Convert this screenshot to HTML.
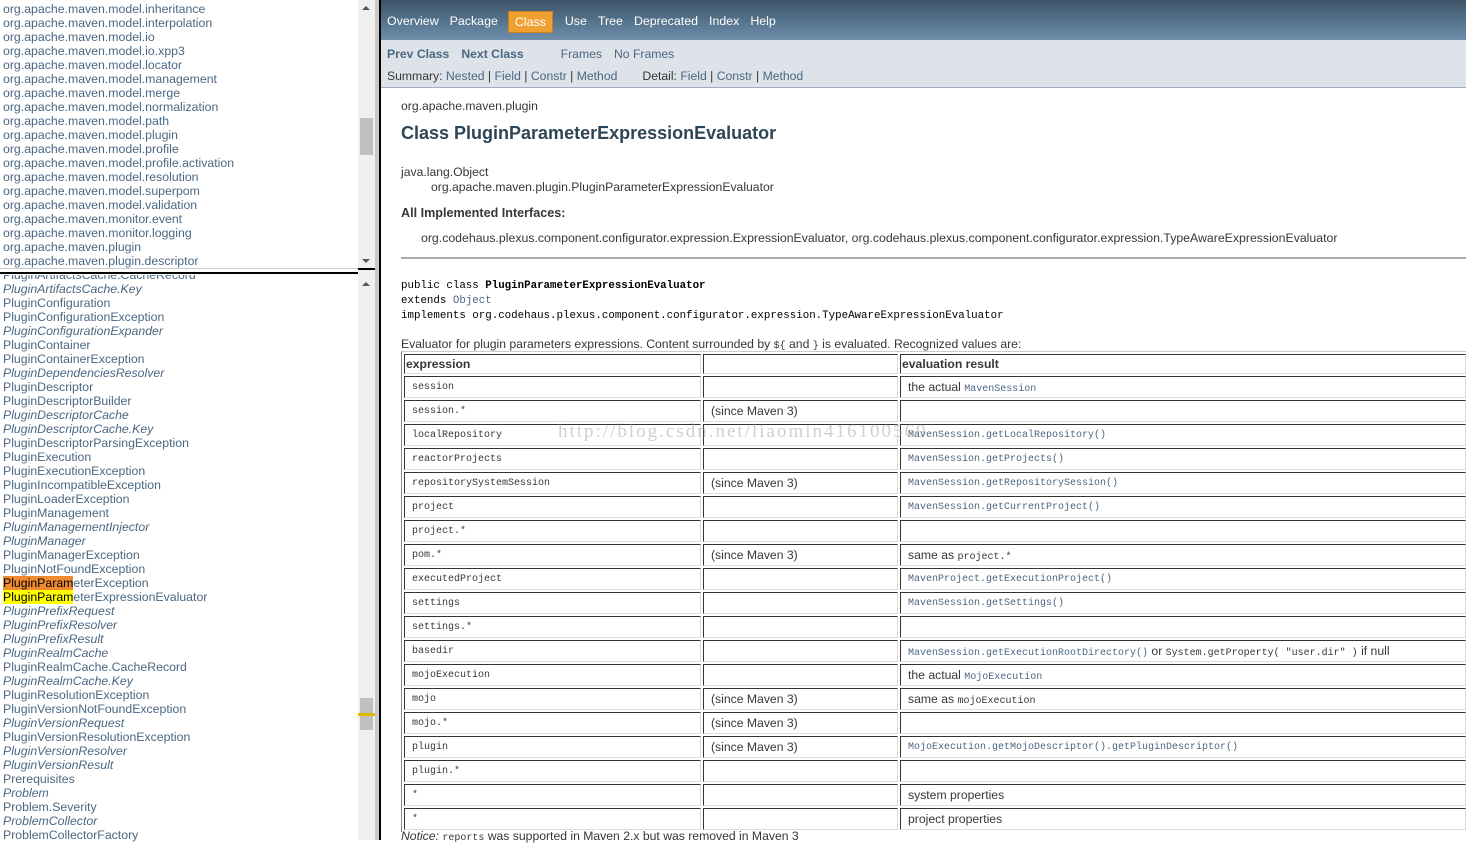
<!DOCTYPE html>
<html><head><meta charset="utf-8">
<style>
*{margin:0;padding:0;box-sizing:border-box}
body{width:1466px;height:840px;overflow:hidden;position:relative;background:#fff;font-family:"Liberation Sans",Arial,sans-serif;font-size:12.2px;color:#353833}
a,.l{color:#4A6782;text-decoration:none}
.abs{position:absolute}
.list{position:absolute;left:3px;line-height:14px;color:#4A6782;white-space:nowrap;font-size:12.3px}
.list i{font-style:italic}
.sb{position:absolute;left:358px;width:17px;background:#f0f0f0}
.arr{position:absolute;left:4px;width:0;height:0;border-left:4px solid transparent;border-right:4px solid transparent}
.mono{font-family:"Liberation Mono","Noto Serif CJK SC",monospace;font-size:10px}
.mono11{font-family:"Liberation Mono",monospace;font-size:10.8px}
table{position:absolute;left:401px;top:351px;width:1067px;table-layout:fixed;border-collapse:separate;border-spacing:2px;border-left:1px solid #888;border-top:1px solid #ccc}
td{border-top:1px solid #333;border-left:1px solid #333;border-bottom:1px solid #ddd;border-right:1px solid #ddd;height:22px;padding:0 7px;vertical-align:middle;white-space:nowrap;overflow:visible}
tr.h td{height:20px;font-weight:bold;padding:0 1px;font-size:12.2px}
</style></head><body>
<div class="list" style="top:2px">
org.apache.maven.model.inheritance<br>org.apache.maven.model.interpolation<br>org.apache.maven.model.io<br>org.apache.maven.model.io.xpp3<br>org.apache.maven.model.locator<br>org.apache.maven.model.management<br>org.apache.maven.model.merge<br>org.apache.maven.model.normalization<br>org.apache.maven.model.path<br>org.apache.maven.model.plugin<br>org.apache.maven.model.profile<br>org.apache.maven.model.profile.activation<br>org.apache.maven.model.resolution<br>org.apache.maven.model.superpom<br>org.apache.maven.model.validation<br>org.apache.maven.monitor.event<br>org.apache.maven.monitor.logging<br>org.apache.maven.plugin<br>org.apache.maven.plugin.descriptor
</div>
<div class="sb" style="top:0;height:268px"><div class="arr" style="top:6px;border-bottom:4px solid #555"></div><div class="abs" style="left:2px;top:118px;width:13px;height:37px;background:#c0c0c0"></div><div class="arr" style="top:259px;border-top:4px solid #555"></div></div>
<div class="list" style="top:268px">
PluginArtifactsCache.CacheRecord<br><i>PluginArtifactsCache.Key</i><br>PluginConfiguration<br>PluginConfigurationException<br><i>PluginConfigurationExpander</i><br>PluginContainer<br>PluginContainerException<br><i>PluginDependenciesResolver</i><br>PluginDescriptor<br>PluginDescriptorBuilder<br><i>PluginDescriptorCache</i><br><i>PluginDescriptorCache.Key</i><br>PluginDescriptorParsingException<br>PluginExecution<br>PluginExecutionException<br>PluginIncompatibleException<br>PluginLoaderException<br>PluginManagement<br><i>PluginManagementInjector</i><br><i>PluginManager</i><br>PluginManagerException<br>PluginNotFoundException<br><span style="background:#f08a30;color:#000">PluginParam</span>eterException<br><span style="background:#ffff00;color:#000">PluginParam</span>eterExpressionEvaluator<br><i>PluginPrefixRequest</i><br><i>PluginPrefixResolver</i><br><i>PluginPrefixResult</i><br><i>PluginRealmCache</i><br>PluginRealmCache.CacheRecord<br><i>PluginRealmCache.Key</i><br>PluginResolutionException<br>PluginVersionNotFoundException<br><i>PluginVersionRequest</i><br>PluginVersionResolutionException<br><i>PluginVersionResolver</i><br><i>PluginVersionResult</i><br>Prerequisites<br><i>Problem</i><br>Problem.Severity<br><i>ProblemCollector</i><br>ProblemCollectorFactory
</div>
<div class="abs" style="left:0;top:268px;width:358px;height:7px;background:#fff;border-top:1px solid #ccc"></div>
<div class="abs" style="left:0;top:272px;width:358px;height:2px;background:#000"></div>
<div class="sb" style="top:276px;height:564px"><div class="arr" style="top:6px;border-bottom:4px solid #555"></div><div class="abs" style="left:2px;top:422px;width:13px;height:32px;background:#c0c0c0"></div><div class="abs" style="left:0;top:437px;width:17px;height:3px;background:#e0b800"></div></div>
<div class="abs" style="left:358px;top:268px;width:17px;height:8px;background:#f0f0f0;border-top:2px solid #000"></div>
<div class="abs" style="left:375px;top:0;width:4px;height:840px;background:#c8c8c8"></div>
<div class="abs" style="left:379px;top:0;width:2px;height:840px;background:#000"></div>
<div class="abs" style="left:381px;top:0;width:1085px;height:40px;background:linear-gradient(#3c5468,#6d8fac)"></div>
<div class="abs" style="left:387px;top:10px;color:#fff;font-size:12.4px;white-space:nowrap">
<span>Overview</span><span style="margin-left:11px">Package</span><span style="display:inline-block;margin-left:10px;padding:3px 6px;background:#f0a030;border:1px solid #c88020;color:#fff;position:relative;top:1px">Class</span><span style="margin-left:12px">Use</span><span style="margin-left:11px">Tree</span><span style="margin-left:11px">Deprecated</span><span style="margin-left:11px">Index</span><span style="margin-left:11px">Help</span></div>
<div class="abs" style="left:381px;top:40px;width:1085px;height:48px;background:#dee3e9;border-bottom:1px solid #9eadc0"></div>
<div class="abs" style="left:387px;top:47px;font-weight:bold;color:#4a6782;white-space:nowrap">Prev Class<span style="margin-left:12px">Next Class</span><span style="font-weight:normal;margin-left:37px">Frames</span><span style="font-weight:normal;margin-left:12px">No Frames</span></div>
<div class="abs" style="left:387px;top:69px;white-space:nowrap">Summary: <span class="l">Nested</span> | <span class="l">Field</span> | <span class="l">Constr</span> | <span class="l">Method</span><span style="margin-left:25px">Detail: <span class="l">Field</span> | <span class="l">Constr</span> | <span class="l">Method</span></span></div>
<div class="abs" style="left:401px;top:99px">org.apache.maven.plugin</div>
<div class="abs" style="left:401px;top:123px;font-size:18px;font-weight:bold;color:#2c4557">Class PluginParameterExpressionEvaluator</div>
<div class="abs" style="left:401px;top:165px">java.lang.Object</div>
<div class="abs" style="left:431px;top:180px">org.apache.maven.plugin.PluginParameterExpressionEvaluator</div>
<div class="abs" style="left:401px;top:206px;font-weight:bold;font-size:12.6px">All Implemented Interfaces:</div>
<div class="abs" style="left:421px;top:231px;white-space:nowrap;font-size:12.3px">org.codehaus.plexus.component.configurator.expression.ExpressionEvaluator, org.codehaus.plexus.component.configurator.expression.TypeAwareExpressionEvaluator</div>
<div class="abs" style="left:401px;top:257px;width:1065px;height:2px;background:#aaa"></div>
<div class="abs mono11" style="left:401px;top:279px;line-height:15px;white-space:nowrap;color:#000">public class <b>PluginParameterExpressionEvaluator</b><br>extends <span class="l">Object</span><br>implements org.codehaus.plexus.component.configurator.expression.TypeAwareExpressionEvaluator</div>
<div class="abs" style="left:401px;top:337px;white-space:nowrap">Evaluator for plugin parameters expressions. Content surrounded by <span class="mono">${</span> and <span class="mono">}</span> is evaluated. Recognized values are:</div>
<table>
<colgroup><col style="width:297px"><col style="width:195px"><col></colgroup>
<tr class="h"><td>expression</td><td></td><td>evaluation result</td></tr>
<tr><td class="mono">session</td><td></td><td>the actual <span class="mono l">MavenSession</span></td></tr>
<tr><td class="mono">session.*</td><td>(since Maven 3)</td><td></td></tr>
<tr><td class="mono">localRepository</td><td></td><td class="mono l">MavenSession.getLocalRepository()</td></tr>
<tr><td class="mono">reactorProjects</td><td></td><td class="mono l">MavenSession.getProjects()</td></tr>
<tr><td class="mono">repositorySystemSession</td><td>(since Maven 3)</td><td class="mono l">MavenSession.getRepositorySession()</td></tr>
<tr><td class="mono">project</td><td></td><td class="mono l">MavenSession.getCurrentProject()</td></tr>
<tr><td class="mono">project.*</td><td></td><td></td></tr>
<tr><td class="mono">pom.*</td><td>(since Maven 3)</td><td>same as <span class="mono">project.*</span></td></tr>
<tr><td class="mono">executedProject</td><td></td><td class="mono l">MavenProject.getExecutionProject()</td></tr>
<tr><td class="mono">settings</td><td></td><td class="mono l">MavenSession.getSettings()</td></tr>
<tr><td class="mono">settings.*</td><td></td><td></td></tr>
<tr><td class="mono">basedir</td><td></td><td><span class="mono l">MavenSession.getExecutionRootDirectory()</span> or <span class="mono">System.getProperty( "user.dir" )</span> if null</td></tr>
<tr><td class="mono">mojoExecution</td><td></td><td>the actual <span class="mono l">MojoExecution</span></td></tr>
<tr><td class="mono">mojo</td><td>(since Maven 3)</td><td>same as <span class="mono">mojoExecution</span></td></tr>
<tr><td class="mono">mojo.*</td><td>(since Maven 3)</td><td></td></tr>
<tr><td class="mono">plugin</td><td>(since Maven 3)</td><td class="mono l">MojoExecution.getMojoDescriptor().getPluginDescriptor()</td></tr>
<tr><td class="mono">plugin.*</td><td></td><td></td></tr>
<tr><td class="mono">*</td><td></td><td>system properties</td></tr>
<tr><td class="mono">*</td><td></td><td>project properties</td></tr>
</table>
<div class="abs" style="left:401px;top:829px;white-space:nowrap"><i>Notice:</i> <span class="mono">reports</span> was supported in Maven 2.x but was removed in Maven 3</div>
<div class="abs" style="left:558px;top:421px;font-family:'Liberation Serif',serif;font-size:19px;letter-spacing:2px;color:rgba(150,150,150,0.45);white-space:nowrap">http://blog.csdn.net/liaomin416100569</div>
</body></html>
